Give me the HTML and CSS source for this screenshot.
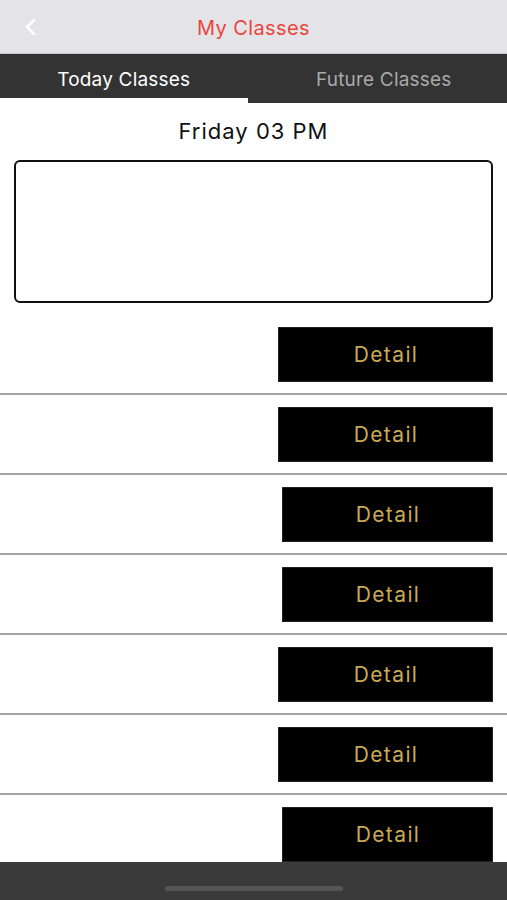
FILE: index.html
```html
<!DOCTYPE html>
<html lang="en">
<head>
    <meta charset="UTF-8">
    <meta name="viewport" content="width=device-width, initial-scale=1.0">
    <title>My Classes</title>
    <link rel="stylesheet" href="styles.css">
</head>
<body>
    <div class="screen">
        <header class="nav">
            <button class="back" aria-label="Back">
                <svg width="14" height="18" viewBox="0 0 14 18">
                    <polyline points="10,2 3,9 10,16" fill="none" stroke="#fff" stroke-width="2.6" stroke-linecap="round" stroke-linejoin="round"/>
                </svg>
            </button>
            <h1 class="nav-title">My Classes</h1>
        </header>

        <nav class="tabs">
            <div class="tab active">Today Classes</div>
            <div class="tab">Future Classes</div>
        </nav>

        <main class="content">
            <div class="date">Friday 03 PM</div>
            <div class="note-box"></div>

            <ul class="class-list">
                <li class="class-row"><button class="detail">Detail</button></li>
                <li class="class-row"><button class="detail">Detail</button></li>
                <li class="class-row"><button class="detail narrow">Detail</button></li>
                <li class="class-row"><button class="detail narrow">Detail</button></li>
                <li class="class-row"><button class="detail">Detail</button></li>
                <li class="class-row"><button class="detail">Detail</button></li>
                <li class="class-row"><button class="detail narrow">Detail</button></li>
            </ul>
        </main>

        <footer class="home-bar">
            <div class="home-indicator"></div>
        </footer>
    </div>
</body>
</html>
```

FILE: styles.css
```css
html, body {
    margin: 0;
    padding: 0;
}
body {
    font-family: Inter, "Liberation Sans", sans-serif;
    background: #fff;
    color: #111;
}
.screen {
    display: flex;
    flex-direction: column;
    height: 900px;
    overflow: hidden;
}
.nav {
    height: 54px;
    background: #e4e4e8;
    border-bottom: 1px solid #c9c9cc;
    display: flex;
    align-items: center;
    justify-content: center;
    position: relative;
    flex-shrink: 0;
    box-sizing: border-box;
    padding-top: 2px;
}
.back {
    position: absolute;
    left: 22px;
    top: 18px;
    background: none;
    border: none;
    padding: 0;
    width: 18px;
    height: 18px;
}
.nav-title {
    margin: 0;
    font-size: 20px;
    font-weight: 400;
    letter-spacing: 0.4px;
    color: #e8453c;
}
.tabs {
    display: grid;
    grid-template-columns: 1fr 1fr;
    background: #333;
    height: 49px;
    flex-shrink: 0;
}
.tab {
    display: flex;
    align-items: center;
    justify-content: center;
    padding-top: 1px;
    padding-left: 7px;
    font-size: 19px;
    letter-spacing: 0.2px;
    color: #a9a9a9;
}
.tab.active {
    color: #fff;
    box-shadow: inset 0 -5px 0 #fff;
    margin-right: 6px;
    padding-left: 0;
}
.content {
    flex: 1;
    overflow: hidden;
}
.date {
    text-align: center;
    font-size: 22px;
    letter-spacing: 1px;
    padding-top: 15px;
    height: 43px;
    box-sizing: border-box;
    line-height: 26px;
}
.note-box {
    margin: 14px 14px 12px;
    height: 139px;
    border: 2px solid #111;
    border-radius: 6px;
}
.class-list {
    list-style: none;
    margin: 0;
    padding: 0;
}
.class-row {
    height: 66px;
    padding-top: 12px;
    border-bottom: 2px solid #a3a3a3;
    display: flex;
    justify-content: flex-end;
    align-items: flex-start;
}
.detail {
    width: 215px;
    height: 55px;
    margin-right: 14px;
    background: #000;
    color: #c9ab56;
    border: 1px solid #222;
    font-family: Inter, "Liberation Sans", sans-serif;
    font-size: 21px;
    letter-spacing: 1.4px;
    padding: 0 0 0 1px;
}
.detail.narrow {
    width: 211px;
}
.home-bar {
    height: 38px;
    background: #3a3a3a;
    flex-shrink: 0;
    display: flex;
    justify-content: center;
}
.home-indicator {
    width: 178px;
    height: 5px;
    margin-top: 24px;
    border-radius: 3px;
    background: #555;
}
```
